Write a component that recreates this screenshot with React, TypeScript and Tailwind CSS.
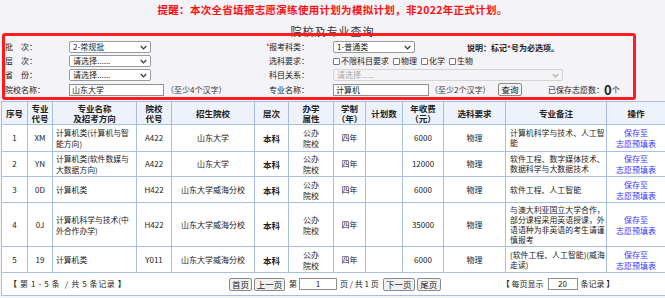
const rows = [
  { no: "1", code: "XM", name: "计算机类(计算机与智能方向)", sc: "A422", school: "山东大学", fee: "6000", note: "计算机科学与技术、人工智能", h: "h-[27px]" },
  { no: "2", code: "YN", name: "计算机类(软件数媒与大数据方向)", sc: "A422", school: "山东大学", fee: "12000", note: "软件工程、数字媒体技术、数据科学与大数据技术", h: "h-[25px]" },
  { no: "3", code: "0D", name: "计算机类", sc: "H422", school: "山东大学威海分校", fee: "6000", note: "软件工程、人工智能", h: "h-[26px]" },
  { no: "4", code: "0J", name: "计算机科学与技术(中外合作办学)", sc: "H422", school: "山东大学威海分校", fee: "35000", note: "与澳大利亚国立大学合作，部分课程采用英语授课，外语语种为非英语的考生请谨慎报考", h: "h-[44px]" },
  { no: "5", code: "19", name: "计算机类", sc: "Y011", school: "山东大学威海分校", fee: "6000", note: "(软件工程、人工智能)(威海走读)", h: "h-[26px]" },
];

const widths = [26, 25, 84, 35, 83, 34, 45, 32, 37, 41, 62, 101, 59];

function Chevron({ color = "#333" }: { color?: string }) {
  return (
    <svg width="7" height="5" viewBox="0 0 7 5" className="shrink-0">
      <polyline points="0.8,1 3.5,3.8 6.2,1" fill="none" stroke={color} strokeWidth="1.2" />
    </svg>
  );
}

function Select({ text, w, disabled }: { text: string; w: string; disabled?: boolean }) {
  return (
    <div
      className={`${w} h-[12px] flex items-center justify-between px-[3px] rounded-[2px] border ${
        disabled ? "border-[#d4d4d4] bg-[#f4f4f6] text-[#a8a8a8]" : "border-[#9a9a9a] bg-white text-[#222]"
      } text-[8px] leading-none`}
    >
      <span>{text}</span>
      <Chevron color={disabled ? "#b0b0b0" : "#333"} />
    </div>
  );
}

function Label({ text, star }: { text: string; star?: boolean }) {
  return (
    <div className="w-[67px] shrink-0 flex items-center">
      {star ? <span className="text-[#ff0000] w-[3px]">*</span> : <span className="w-[3px]" />}
      <span>{text}</span>
    </div>
  );
}

function Check({ text }: { text: string }) {
  return (
    <span className="flex items-center mr-[4px]">
      <span className="w-[7px] h-[7px] border border-[#777] bg-white rounded-[1px] mr-[1px]" />
      {text}
    </span>
  );
}

function Btn({ text, w }: { text: string; w: string }) {
  return (
    <div className={`${w} h-[13px] flex items-center justify-center border border-[#8a8a8a] bg-[#f1f1f1] rounded-[2px] text-[8.5px] leading-none`}>
      {text}
    </div>
  );
}

const cell = "border border-[#a6bfe6]";

export default function App() {
  return (
    <div className="relative w-[665px] h-[298px] overflow-hidden bg-[#f3f3f8] text-[#222] text-[8px] font-['Noto_Sans_CJK_SC',sans-serif]">
      <div className="h-[19px] leading-[19px] text-center text-[#ff1010] font-bold text-[10.5px] tracking-[0.3px]">
        提醒：本次全省填报志愿演练使用计划为模拟计划，非2022年正式计划。
      </div>
      <div className="h-[21px] pt-[6px] leading-[12px] text-center text-[11px] tracking-[1px] text-[#333]">院校及专业查询</div>

      <div className="pl-[2px]">
        <div className="h-[14px] flex items-center">
          <Label text="批　次：" star />
          <div className="w-[197px] shrink-0">
            <Select text="2-常规批" w="w-[82px]" />
          </div>
          <Label text="报考科类：" star />
          <div className="w-[134px] shrink-0">
            <Select text="1-普通类" w="w-[82px]" />
          </div>
          <div className="font-bold text-[8px] pt-[2px]">
            说明：标记<span className="text-[#ff0000]">*</span>号为必选项。
          </div>
        </div>
        <div className="h-[14px] flex items-center">
          <Label text="层　次：" />
          <div className="w-[197px] shrink-0">
            <Select text="请选择......" w="w-[82px]" />
          </div>
          <Label text="选科要求：" />
          <div className="flex items-center">
            <Check text="不限科目要求" />
            <Check text="物理" />
            <Check text="化学" />
            <Check text="生物" />
          </div>
        </div>
        <div className="h-[14px] flex items-center">
          <Label text="省　份：" />
          <div className="w-[197px] shrink-0">
            <Select text="请选择......" w="w-[82px]" />
          </div>
          <Label text="科目关系：" />
          <Select text="请选择......" w="w-[230px]" disabled />
        </div>
        <div className="h-[15px] flex items-center">
          <Label text="院校名称：" />
          <div className="w-[197px] shrink-0 flex items-center">
            <div className="w-[95px] h-[12px] border border-[#8f8f8f] bg-white px-[2px] leading-[10px]">山东大学</div>
            <span className="ml-[2px] text-[#333]">（至少4个汉字）</span>
          </div>
          <Label text="专业名称：" />
          <div className="w-[96px] h-[12px] border border-[#8f8f8f] bg-white px-[2px] leading-[10px]">计算机</div>
          <span className="ml-[1px] text-[#333] w-[68px]">（至少2个汉字）</span>
          <Btn text="查询" w="w-[24px]" />
          <span className="ml-[26px] flex items-center">
            已保存志愿数：<span className="font-bold text-[13px] leading-none">0</span>个
          </span>
        </div>
      </div>

      <table className="mt-[4px] ml-[1px] table-fixed border-collapse w-[663px] bg-white text-[8px] leading-[10px]">
        <colgroup>
          {widths.map((w, i) => (
            <col key={i} style={{ width: w }} />
          ))}
        </colgroup>
        <thead>
          <tr className="h-[23px] bg-[#edf2fb]">
            {["序号", "专业\n代号", "专业名称\n及招考方向", "院校\n代号", "招生院校", "层次", "办学\n属性", "学制\n（年）", "计划数", "年收费\n（元）", "选科要求", "专业备注", "操作"].map((t, i) => (
              <th key={i} className={`${cell} text-center whitespace-pre-line font-bold p-0 text-[8.5px]`}>
                {t}
              </th>
            ))}
          </tr>
        </thead>
        <tbody>
          {rows.map((r) => (
            <tr key={r.no} className={r.h}>
              <td className={`${cell} text-center`}>{r.no}</td>
              <td className={`${cell} text-center`}>{r.code}</td>
              <td className={`${cell} text-left pl-[3px] pr-0 text-[7.8px] leading-[11px] break-all`}>{r.name}</td>
              <td className={`${cell} text-center`}>{r.sc}</td>
              <td className={`${cell} text-center`}>{r.school}</td>
              <td className={`${cell} text-center font-bold text-[8.5px] text-[#2a1a1a]`}>本科</td>
              <td className={`${cell} text-center leading-[11px] px-[12px]`}>公办院校</td>
              <td className={`${cell} text-center`}>四年</td>
              <td className={cell}></td>
              <td className={`${cell} text-center`}>{r.fee}</td>
              <td className={`${cell} text-center`}>物理</td>
              <td className={`${cell} text-left pl-[4px] pr-[1px] text-[7.9px] leading-[10px] break-all`}>{r.note}</td>
              <td className={`${cell} text-center text-[#3535ff] leading-[11px]`}>
                <div>保存至</div>
                <div>志愿预填表</div>
              </td>
            </tr>
          ))}
          <tr className="h-[23px]">
            <td colSpan={13} className={`${cell} p-0`}>
              <div className="flex items-center">
                <span className="w-[227px] pl-[7px] shrink-0 whitespace-pre tracking-[0.6px]">
                  <b>【</b> 第 1 - 5 条  / 共 5 条记录 <b>】</b>
                </span>
                <Btn text="首页" w="w-[23px]" />
                <span className="w-[2px]" />
                <Btn text="上一页" w="w-[31px]" />
                <span className="ml-[4px] mr-[2px]">第</span>
                <div className="w-[38px] h-[12px] border border-[#8f8f8f] bg-white text-center leading-[10px]">1</div>
                <span className="ml-[3px] mr-[4px] whitespace-pre">页 / 共 1 页</span>
                <Btn text="下一页" w="w-[32px]" />
                <span className="w-[2px]" />
                <Btn text="尾页" w="w-[24px]" />
                <span className="ml-[61px] whitespace-pre">
                  <b>【</b> 每页显示
                </span>
                <div className="ml-[4px] w-[30px] h-[12px] border border-[#8f8f8f] bg-white text-center leading-[10px]">20</div>
                <span className="ml-[3px] whitespace-pre">
                  条记录 <b>】</b>
                </span>
              </div>
            </td>
          </tr>
        </tbody>
      </table>

      <div className="absolute left-[2px] top-[33px] w-[634px] h-[67px] border-[3px] border-[#ff1c1c] rounded-[3px] pointer-events-none" />
    </div>
  );
}
